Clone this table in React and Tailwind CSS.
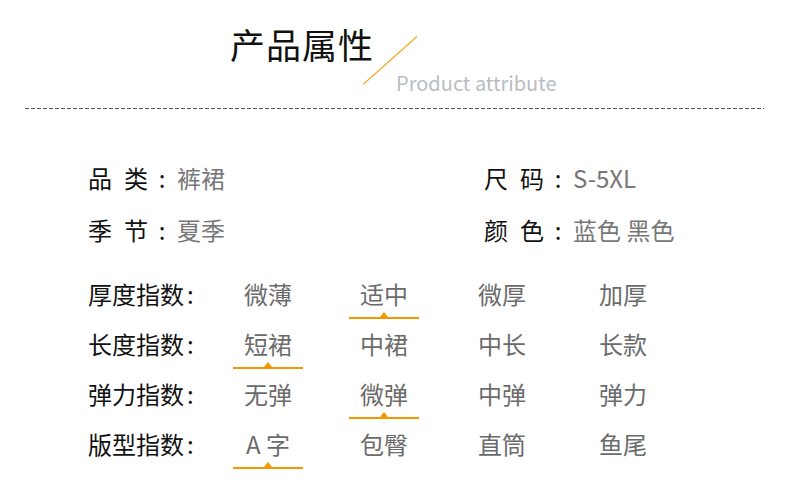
import React from "react"

const font = { fontFamily: '"Noto Sans CJK SC", "Noto Sans", sans-serif' }

const indexRows = [
  { label: "厚度指数", options: ["微薄", "适中", "微厚", "加厚"], active: 1 },
  { label: "长度指数", options: ["短裙", "中裙", "中长", "长款"], active: 0 },
  { label: "弹力指数", options: ["无弹", "微弹", "中弹", "弹力"], active: 1 },
  { label: "版型指数", options: ["A 字", "包臀", "直筒", "鱼尾"], active: 0 },
]

const cellGaps = ["ml-0", "ml-[46px]", "ml-[48px]", "ml-[51px]"]

function InfoPair({ a, b, value }) {
  return (
    <div className="flex items-center leading-[24px] text-[24px]">
      <span className="w-[24px] text-[#111]">{a}</span>
      <span className="ml-[12px] w-[24px] text-[#111]">{b}</span>
      <span className="ml-[2px] w-[24px] text-center text-[#111]">:</span>
      <span className="ml-[3px] text-[#777]">{value}</span>
    </div>
  )
}

function IndexRow({ row }) {
  return (
    <div className="flex items-start h-[50px]">
      <div className="w-[145px] flex text-[24px] leading-[24px] text-[#111]">
        <span>{row.label}</span>
        <span className="ml-[3px]">:</span>
      </div>
      {row.options.map((opt, i) => (
        <div key={opt} className={`${cellGaps[i]} w-[70px] flex flex-col items-center`}>
          <span className="text-[24px] leading-[24px] text-[#6b6b6b] whitespace-pre">{opt}</span>
          {i === row.active && (
            <>
              <div className="mt-[6px] w-0 h-0 border-l-[4px] border-r-[4px] border-b-[5px] border-l-transparent border-r-transparent border-b-[#f39800]" />
              <div className="w-[70px] h-[2px] bg-[#f39800]" />
            </>
          )}
        </div>
      ))}
    </div>
  )
}

export default function App() {
  return (
    <div className="w-[790px] h-[496px] bg-white overflow-hidden" style={font}>
      {/* header */}
      <div className="relative h-[108px]">
        <div className="flex items-start">
          <h1 className="ml-[230px] mt-[26px] text-[35px] leading-none font-normal text-[#111] tracking-[1px]">
            产品属性
          </h1>
          <span className="ml-[22px] mt-[70px] text-[20px] leading-[26px] text-[#b9bdc4]">
            Product attribute
          </span>
        </div>
        <svg className="absolute left-[362px] top-[35px]" width="57" height="51" viewBox="0 0 57 51">
          <line x1="1" y1="49.5" x2="55" y2="1.5" stroke="#f5a623" strokeWidth="1.2" />
        </svg>
      </div>

      <div className="ml-[25px] w-[739px] h-px bg-[repeating-linear-gradient(90deg,#555_0_4px,transparent_4px_6px)]" />

      {/* basic info */}
      <div className="ml-[88px] mt-[57px] grid grid-cols-[396px_auto] gap-y-[28px]">
        <InfoPair a="品" b="类" value="裤裙" />
        <InfoPair a="尺" b="码" value="S-5XL" />
        <InfoPair a="季" b="节" value="夏季" />
        <InfoPair a="颜" b="色" value="蓝色 黑色" />
      </div>

      {/* index rows */}
      <div className="ml-[88px] mt-[40px] flex flex-col">
        {indexRows.map((row) => (
          <IndexRow key={row.label} row={row} />
        ))}
      </div>
    </div>
  )
}
